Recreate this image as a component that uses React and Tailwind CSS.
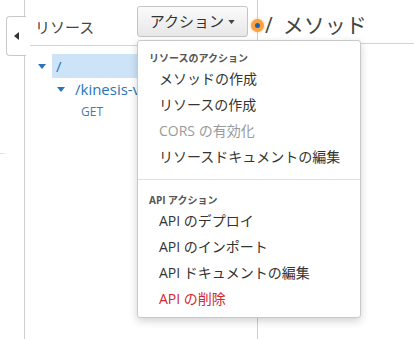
import { useState } from "react";

const font = "font-['Open_Sans','Noto_Sans_CJK_JP',sans-serif]";

// Down-pointing caret used in the tree and on the button
function Caret({ className = "", color = "#2a74b9", w = 8, h = 5 }) {
  return (
    <svg width={w} height={h} viewBox="0 0 8 5" className={className}>
      <path d="M0 0 L8 0 L4 5 Z" fill={color} />
    </svg>
  );
}

function ActionMenu() {
  const resourceActions = [
    { label: "メソッドの作成" },
    { label: "リソースの作成" },
    { label: "CORS の有効化", disabled: true },
    { label: "リソースドキュメントの編集" },
  ];
  const apiActions = [
    { label: "API のデプロイ" },
    { label: "API のインポート" },
    { label: "API ドキュメントの編集" },
    { label: "API の削除", danger: true },
  ];

  const item = (a) => (
    <div
      key={a.label}
      className={`h-[26px] flex items-center pl-[21px] text-[14px] whitespace-nowrap ${
        a.disabled ? "text-[#9a9a9a]" : a.danger ? "text-[#d0282e]" : "text-[#333]"
      }`}
    >
      {a.label}
    </div>
  );

  return (
    <div className="absolute left-[137px] top-[40px] w-[224px] bg-white border border-[#c9c9c9] rounded-[3px] shadow-[0_3px_8px_rgba(0,0,0,0.18)] pt-[10px] pb-[6px] z-20">
      <div className="h-[14px] flex items-center pl-[11px] text-[10px] font-bold text-[#555]">
        リソースのアクション
      </div>
      {resourceActions.map(item)}
      <div className="mt-[10px] h-px bg-[#e1e1e1]" />
      <div className="mt-[13px] h-[14px] flex items-center pl-[11px] text-[10px] font-bold text-[#555]">
        API アクション
      </div>
      {apiActions.map(item)}
    </div>
  );
}

export default function App() {
  const [open] = useState(true);

  return (
    <div className={`relative w-[414px] h-[339px] bg-white overflow-hidden flex ${font}`}>
      {/* Gutter with collapse tab */}
      <div className="relative w-[25px] shrink-0 border-r border-[#cfcfcf]">
        <div className="absolute left-[6px] top-[16px] w-[20px] h-[40px] bg-white border border-r-0 border-[#c8c8c8] rounded-l-[4px] flex items-center justify-center z-10">
          <svg width="5" height="8" viewBox="0 0 5 8" className="mr-[1px]">
            <path d="M5 0 L5 8 L0 4 Z" fill="#333" />
          </svg>
        </div>
        <div className="h-[153px]" />
        <div className="w-[8px] h-px bg-gradient-to-r from-[#d8d8d8] to-transparent" />
      </div>

      {/* Resources column */}
      <div className="w-[232px] shrink-0 flex flex-col">
        <div className="h-[46px] flex items-start border-b border-[#d4d4d4] ml-[5px]">
          <span className="w-[107px] pl-[5px] mt-[17px] text-[15px] leading-[20px] text-[#444] whitespace-nowrap">
            リソース
          </span>
          <button className="mt-[6px] w-[111px] h-[31px] rounded-[3px] border border-[#c4c4c4] bg-gradient-to-b from-[#fbfbfb] to-[#e7e7e7] flex items-center justify-center gap-[4px] text-[15px] text-[#333]">
            アクション
            <Caret color="#444" w={7} h={4} />
          </button>
        </div>

        <div className="pt-[8px] text-[#2a74b9]">
          <div className="flex items-center h-[24px]">
            <div className="w-[27px] flex justify-end pr-[6px]">
              <Caret />
            </div>
            <div className="flex-1 h-full bg-[#cde4f8] flex items-center pl-[4px] text-[15px]">/</div>
          </div>
          <div className="flex items-center h-[23px]">
            <div className="w-[50px] flex justify-end pr-[10px]">
              <Caret />
            </div>
            <span className="text-[15px] whitespace-nowrap">/kinesis-vpc</span>
          </div>
          <div className="flex items-center h-[22px] pl-[56px] text-[12px] text-[#4d78a3]">
            GET
          </div>
        </div>
      </div>

      {/* Method panel */}
      <div className="relative flex-1 border-l border-[#cfcfcf]">
        <div className="absolute left-[-7px] top-[19px] w-[13px] h-[13px] rounded-full bg-[#f6a245] shadow-[0_0_3px_rgba(246,162,69,0.7)] flex items-center justify-center">
          <div className="w-[5px] h-[5px] rounded-full bg-[#2261a8]" />
        </div>
        <div className="h-[44px] border-b border-[#d4d4d4] flex items-start pl-[7px] text-[21px] leading-[30px] text-[#444] whitespace-nowrap">
          <span className="mt-[10px]">/</span>
          <span className="mt-[10px] ml-[10px]">メソッド</span>
        </div>
      </div>

      {open && <ActionMenu />}
    </div>
  );
}
